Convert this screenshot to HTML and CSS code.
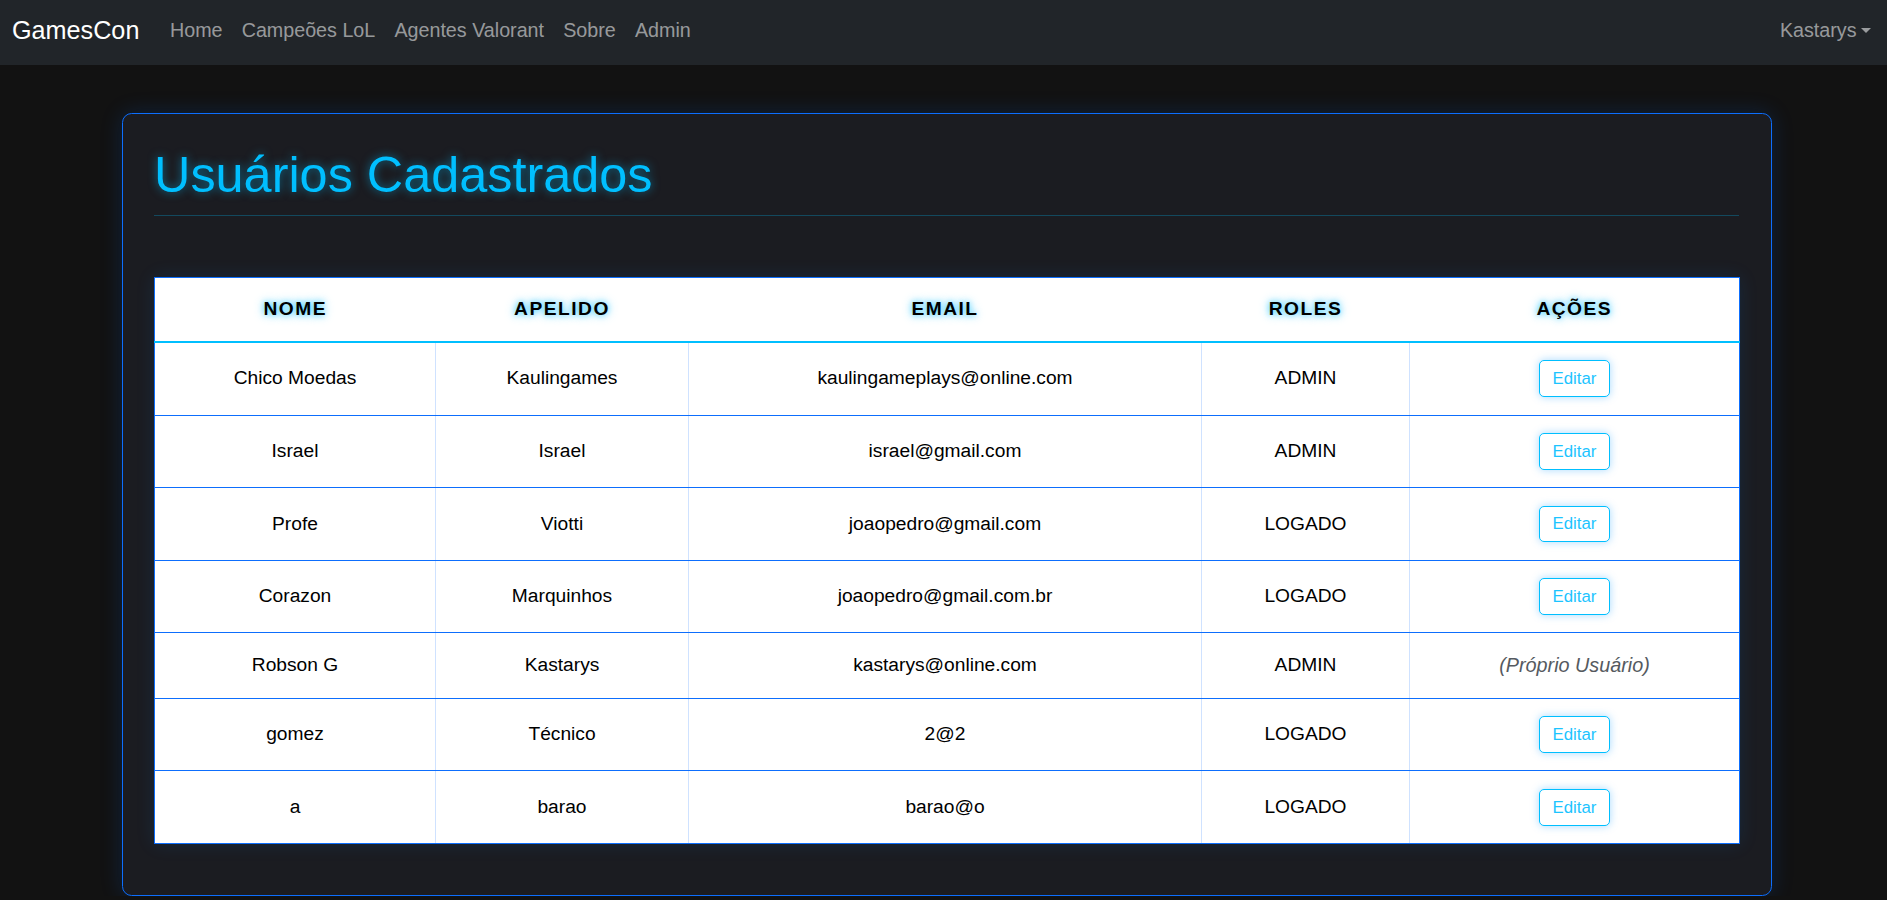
FILE: index.html
```html
<!DOCTYPE html>
<html lang="pt-BR">
<head>
<meta charset="utf-8">
<title>GamesCon - Usuários</title>
<link rel="stylesheet" href="styles.css">
</head>
<body>
<nav class="navbar">
  <div class="nav-left">
    <a class="brand" href="#">GamesCon</a>
    <ul class="nav-links">
      <li><a href="#">Home</a></li>
      <li><a href="#">Campeões LoL</a></li>
      <li><a href="#">Agentes Valorant</a></li>
      <li><a href="#">Sobre</a></li>
      <li><a href="#">Admin</a></li>
    </ul>
  </div>
  <a class="user-menu" href="#">Kastarys<span class="caret"></span></a>
</nav>

<main class="page">
  <section class="card">
    <h1 class="title">Usuários Cadastrados</h1>
    <table class="users">
      <colgroup>
        <col class="c-nome"><col class="c-apelido"><col class="c-email"><col class="c-roles"><col class="c-acoes">
      </colgroup>
      <thead>
        <tr><th>NOME</th><th>APELIDO</th><th>EMAIL</th><th>ROLES</th><th>AÇÕES</th></tr>
      </thead>
      <tbody>
        <tr><td>Chico Moedas</td><td>Kaulingames</td><td>kaulingameplays@online.com</td><td>ADMIN</td><td><button class="btn-edit">Editar</button></td></tr>
        <tr><td>Israel</td><td>Israel</td><td>israel@gmail.com</td><td>ADMIN</td><td><button class="btn-edit">Editar</button></td></tr>
        <tr><td>Profe</td><td>Viotti</td><td>joaopedro@gmail.com</td><td>LOGADO</td><td><button class="btn-edit">Editar</button></td></tr>
        <tr><td>Corazon</td><td>Marquinhos</td><td>joaopedro@gmail.com.br</td><td>LOGADO</td><td><button class="btn-edit">Editar</button></td></tr>
        <tr><td>Robson G</td><td>Kastarys</td><td>kastarys@online.com</td><td>ADMIN</td><td><em class="self">(Próprio Usuário)</em></td></tr>
        <tr><td>gomez</td><td>Técnico</td><td>2@2</td><td>LOGADO</td><td><button class="btn-edit">Editar</button></td></tr>
        <tr><td>a</td><td>barao</td><td>barao@o</td><td>LOGADO</td><td><button class="btn-edit">Editar</button></td></tr>
      </tbody>
    </table>
  </section>
</main>
</body>
</html>
```

FILE: styles.css
```css
* { box-sizing: border-box; }

html, body {
  margin: 0;
  padding: 0;
}

body {
  background: #121212;
  font-family: "Liberation Sans", Arial, sans-serif;
  font-size: 19.2px;
  line-height: 1.5;
  color: #000;
}

a { text-decoration: none; }

/* Navbar */
.navbar {
  height: 65px;
  background: #212529;
  display: flex;
  justify-content: space-between;
  align-items: flex-start;
  padding: 15.6px 6px 0 12px;
}

.nav-left {
  display: flex;
  align-items: center;
}

.brand {
  color: #fff;
  font-size: 25.2px;
  line-height: 28.8px;
  margin-right: 21px;
}

.nav-links {
  list-style: none;
  margin: 0;
  padding: 0;
  display: flex;
}

.nav-links a,
.user-menu {
  display: block;
  color: rgba(255, 255, 255, 0.55);
  font-size: 19.7px;
  line-height: 28.8px;
  padding: 0 9.6px;
}

.user-menu {
  display: flex;
  align-items: center;
}

.caret {
  display: inline-block;
  margin-left: 4.9px;
  border-top: 5.8px solid rgba(255, 255, 255, 0.55);
  border-left: 5.8px solid transparent;
  border-right: 5.8px solid transparent;
  margin-top: 1px;
}

/* Page */
.page {
  padding: 48px 0 0 122px;
}

.card {
  width: 1650px;
  background: #1b1c21;
  border: 1px solid #0d6efd;
  border-radius: 9.6px;
  padding: 32px 32px 32px 31px;
  box-shadow: 0 0 22px rgba(13, 110, 253, 0.18);
}

.title {
  margin: 0 0 61px;
  font-size: 50.4px;
  font-weight: 400;
  line-height: 58.8px;
  color: #00bfff;
  text-shadow: 0 0 10px rgba(0, 191, 255, 0.55);
  padding-bottom: 10px;
  border-bottom: 1px solid rgba(0, 191, 255, 0.28);
}

/* Table */
.users {
  width: 1585px;
  table-layout: fixed;
  border-collapse: collapse;
  background: #fff;
  border: 1px solid #0d6efd;
  margin-bottom: 19.2px;
  box-shadow: 0 0 18px rgba(0, 140, 255, 0.12);
}

.c-nome { width: 281px; }
.c-apelido { width: 253px; }
.c-email { width: 513px; }
.c-roles { width: 208px; }
.c-acoes { width: 330px; }

.users th {
  font-weight: 700;
  letter-spacing: 1.5px;
  text-align: center;
  color: #000;
  padding: 17.2px 8px;
  line-height: 28.8px;
  border-bottom: 2px solid #00bfff;
  text-shadow: 0 0 6px rgba(0, 191, 255, 0.75), 0 0 12px rgba(0, 191, 255, 0.45);
}

.users td {
  text-align: center;
  vertical-align: middle;
  padding: 17.4px 8px;
  line-height: 28.8px;
  border-top: 1px solid #0d6efd;
  border-bottom: 1px solid #0d6efd;
  border-left: 1px solid #cfe2ff;
  border-right: 1px solid #cfe2ff;
}

.users td:first-child { border-left-color: #0d6efd; }
.users td:last-child { border-right-color: #0d6efd; }

.btn-edit {
  display: block;
  margin: 0 auto;
  font-family: "Liberation Sans", Arial, sans-serif;
  font-size: 16.8px;
  line-height: 25.2px;
  padding: 4.8px 12.4px;
  color: #1cc4ff;
  background: #fff;
  border: 1px solid #00bfff;
  border-radius: 5px;
  box-shadow: 0 0 9px rgba(0, 150, 255, 0.35);
  cursor: pointer;
}

.self {
  color: #555a60;
  font-style: italic;
  font-size: 19.8px;
}
```
